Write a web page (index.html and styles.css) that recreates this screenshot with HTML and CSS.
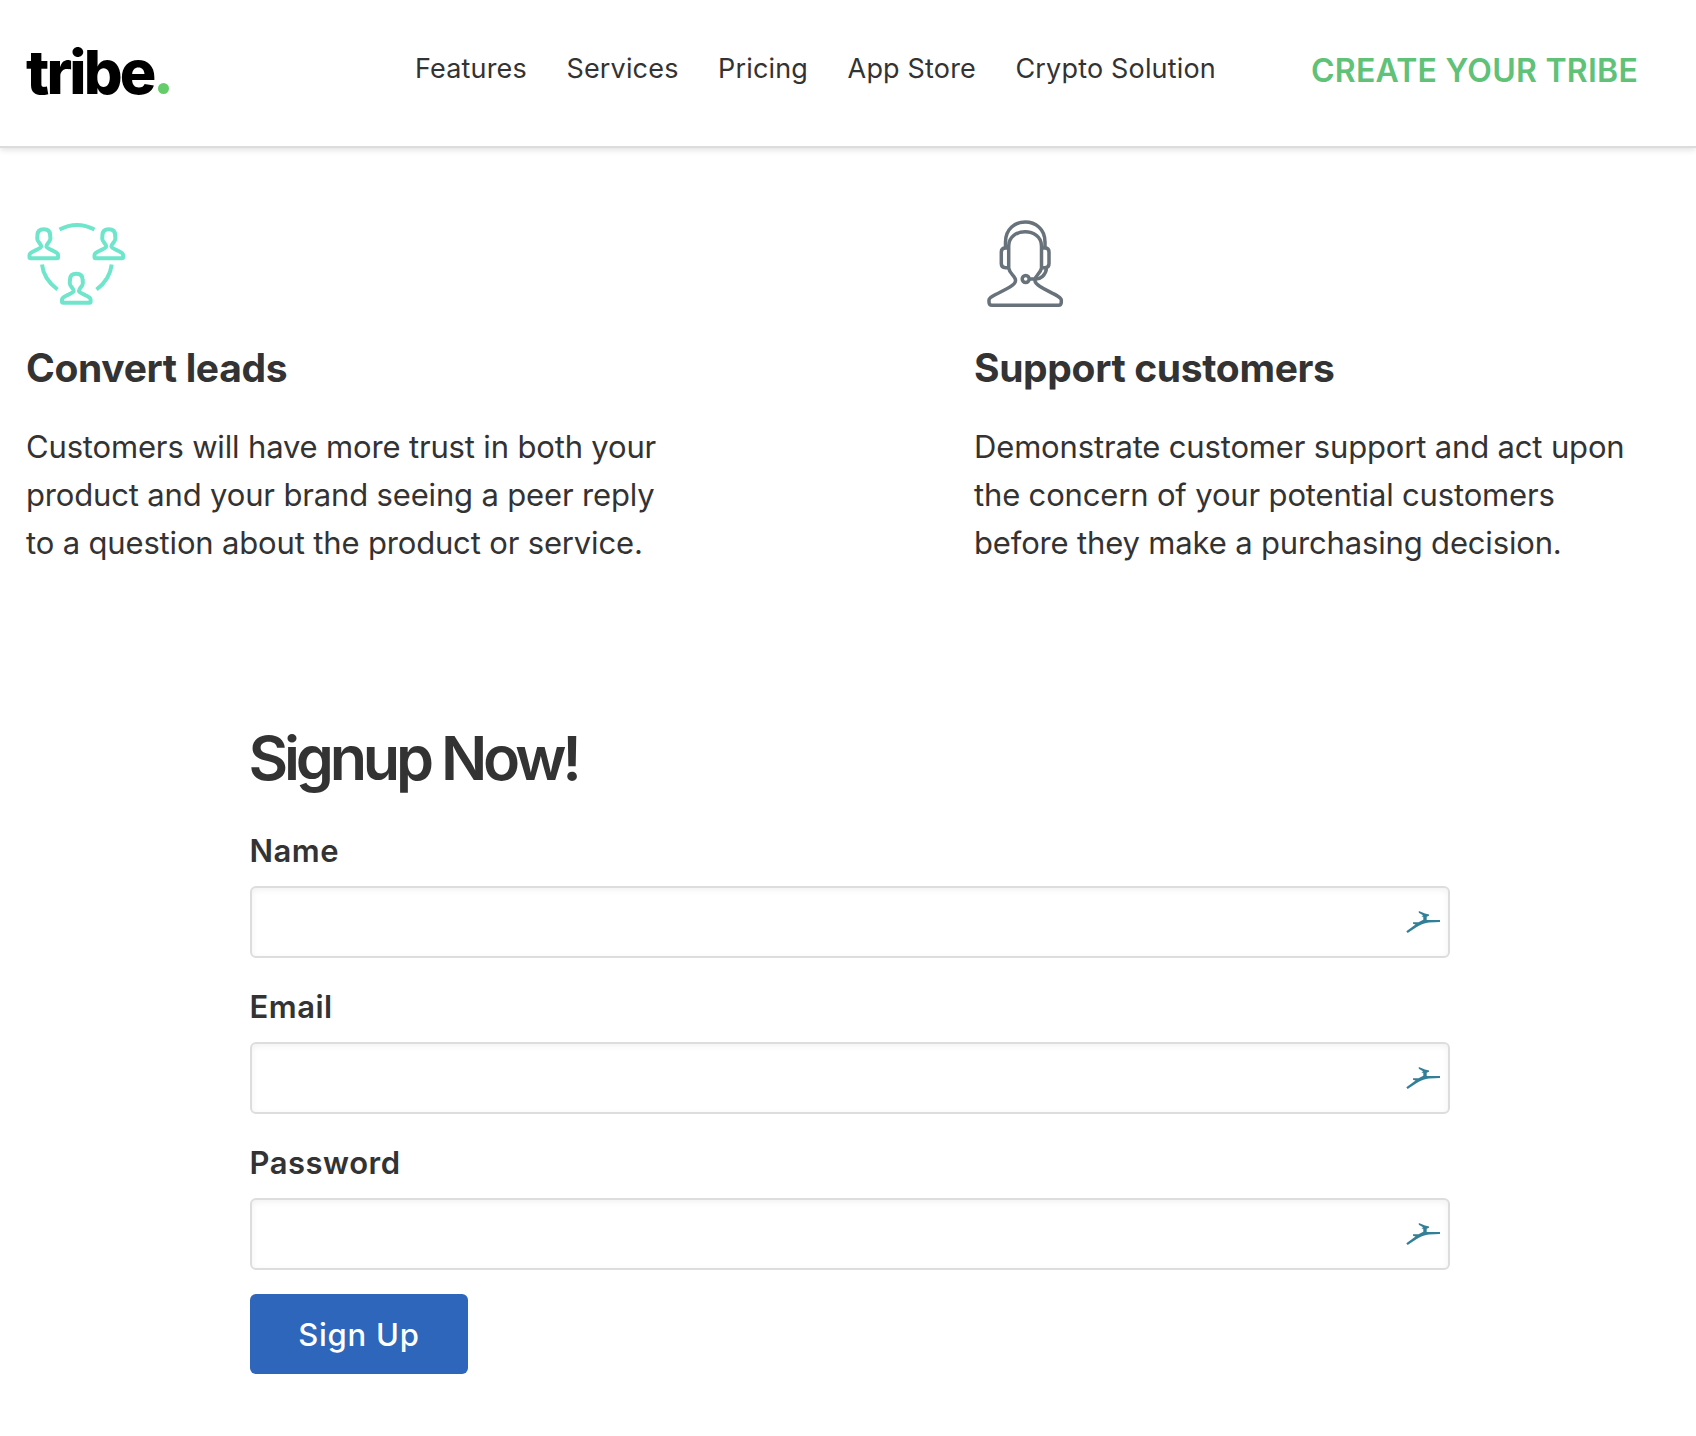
FILE: index.html
```
<!DOCTYPE html>
<html lang="en">
<head>
<meta charset="utf-8">
<title>Tribe</title>
<link rel="stylesheet" href="styles.css">
</head>
<body>
<header class="header">
  <a class="logo">tribe<span class="logo-dot"></span></a>
  <nav class="nav"><a>Features</a><a>Services</a><a>Pricing</a><a>App Store</a><a>Crypto Solution</a></nav>
  <a class="cta">CREATE YOUR TRIBE</a>
</header>
<main>
  <section class="features">
    <article class="feature">
      <svg class="feature-icon" viewBox="0 0 140 120" fill="none" stroke="#6fe6cb" stroke-width="4" stroke-linejoin="round">
        <defs><path id="person" d="M-6.300 -19C-6.300 -23 -4.500 -24.800 0 -24.800C4.500 -24.800 6.300 -23 6.300 -19L6.600 -15.500C6.400 -11.500 2.800 -11 2.600 -7.500C3 -4.500 14.300 -3 14.300 1V3Q14.300 4.200 13 4.200H-13Q-14.300 4.200 -14.300 3V1C-14.300 -3 -3 -4.500 -2.600 -7.500C-2.800 -11 -6.400 -11.500 -6.600 -15.500Z"/></defs>
        <use href="#person" x="33.800" y="49"/>
        <use href="#person" x="98.800" y="49"/>
        <use href="#person" x="66.300" y="93.500"/>
        <path d="M49.500 24.500Q67 15.500 84.500 24.500M32 59.500Q33.500 74 47.500 84.500M101.700 59.500Q100 74.500 86.500 84.500"/>
      </svg>
      <h3 class="feature-title">Convert leads</h3>
      <p class="feature-text">Customers will have more trust in both your<br>product and your brand seeing a peer reply<br>to a question about the product or service.</p>
    </article>
    <article class="feature">
      <svg class="feature-icon" viewBox="0 0 140 120" fill="none" stroke="#68727b" stroke-width="3.500" stroke-linejoin="round">
        <path d="M45.500 43V37C45.500 10.300 85 10.300 85 37V43"/>
        <path d="M48.700 63V41C48.700 22 81.500 22 81.500 41V63C80.500 69 75 70 75 75V76C76 83 101.300 90 101.300 95V97Q101.300 100.300 98.500 100.300H32Q29 100.300 29 97V95C29 90 55 83 55.500 76V75C55.500 71 49.500 69 48.700 63Z"/>
        <path d="M48.700 43H45.500Q41.300 43 41.300 47V58.500Q41.300 62.700 45.500 62.700H48.700M81.500 43H85Q89 43 89 47V58.500Q89 62.700 85 62.700H81.500M86.500 63C86 70.500 80 74 76 74H69.500"/>
        <circle cx="65.700" cy="74" r="3.500"/>
      </svg>
      <h3 class="feature-title">Support customers</h3>
      <p class="feature-text">Demonstrate customer support and act upon<br>the concern of your potential customers<br>before they make a purchasing decision.</p>
    </article>
  </section>
  <form class="signup">
    <h2 class="signup-title">Signup Now!</h2>
    <label class="field"><span class="field-label">Name</span><span class="field-box"><input type="text"><svg class="field-icon" viewBox="0 0 34 22"><use href="#antelope"/></svg></span></label>
    <label class="field"><span class="field-label">Email</span><span class="field-box"><input type="email"><svg class="field-icon" viewBox="0 0 34 22"><use href="#antelope"/></svg></span></label>
    <label class="field"><span class="field-label">Password</span><span class="field-box"><input type="password"><svg class="field-icon" viewBox="0 0 34 22"><path id="antelope" fill="#347f98" d="M0.300 20.300L9.500 13.500L7 12.800V11.200H12.500L17.300 8.800V5.700H15.500L17 4.300L12.800 1.800V0L19 2.500L23 3.400V4.800L20.700 5.800V9H34V11L23 11.400C15 12.300 10 16.500 1.700 22Z"/></svg></span></label>
    <button class="submit" type="button">Sign Up</button>
  </form>
</main>
</body>
</html>
```
FILE: styles.css
```
* { box-sizing: border-box; }
body { margin: 0; background: #fff; color: #333; font-family: Inter, "Liberation Sans", sans-serif; }
.header { display: flex; height: 148px; border-bottom: 2px solid #dcdcdc; box-shadow: 0 2px 6px rgba(0,0,0,.12); }
.logo { display: flex; margin: 36px 0 0 26px; width: 389px; height: 72px; font-size: 61px; line-height: 72px; font-weight: 800; color: #000; letter-spacing: -2.900px; }
.logo-dot { width: 11px; height: 11px; margin: 47px 0 0 5px; border-radius: 50%; background: #65cc6a; }
.nav { display: flex; gap: 39.500px; padding-top: 49px; font-size: 27px; line-height: 40px; letter-spacing: .17px; }
.cta { margin: 47px 0 0 95px; font-size: 32px; line-height: 48px; font-weight: 600; color: #60c178; letter-spacing: .25px; }
.features { display: grid; grid-template-columns: 948px 1fr; padding: 57px 0 0 26px; }
.feature-icon { display: block; width: 140px; height: 120px; margin-left: -16px; }
.feature:nth-child(2) .feature-icon { margin-left: -14.500px; }
.feature-title { margin: 19px 0 0; font-size: 39px; line-height: 48px; font-weight: 700; letter-spacing: -.35px; }
.feature-text { margin: 31px 0 0; font-size: 31px; line-height: 48px; letter-spacing: -.16px; }
.signup { width: 1200px; margin: 155px 0 0 250px; }
.signup-title { margin: 0 0 33px -1.500px; font-size: 61px; line-height: 72px; font-weight: 600; letter-spacing: -4.200px; }
.field { display: block; }
.field + .field { margin-top: 25px; }
.field-label { display: block; height: 59px; margin-left: -.5px; font-size: 31px; line-height: 48px; font-weight: 600; letter-spacing: .5px; }
.field-box { display: block; position: relative; }
.field-box input { display: block; width: 100%; height: 72px; padding: 0 60px 0 16px; border: 2px solid #ddd; border-radius: 6px; box-shadow: inset 0 2px 6px rgba(0,0,0,.06); background: #fff; font: inherit; font-size: 32px; }
.field-icon { position: absolute; right: 10px; top: 25px; width: 34px; height: 22px; }
.submit { display: block; width: 218px; height: 80px; margin-top: 24px; padding: 0; border: 0; border-radius: 6px; background: #2e66bb; color: #fff; font: 500 31px/82px Inter, sans-serif; letter-spacing: .8px; }
```
